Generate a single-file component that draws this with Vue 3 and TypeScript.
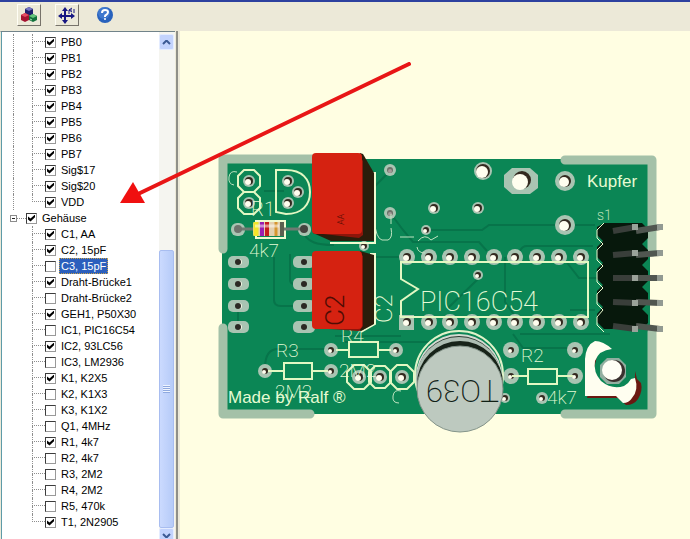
<script setup lang="ts">
import { reactive, ref } from 'vue'

interface TreeItem {
  label: string
  checked: boolean
}

interface Via {
  x: number
  y: number
  r: number
  hole: number
}

const item = (label: string, checked = true): TreeItem => ({ label, checked })

const signals = reactive<TreeItem[]>([
  item('PB0'),
  item('PB1'),
  item('PB2'),
  item('PB3'),
  item('PB4'),
  item('PB5'),
  item('PB6'),
  item('PB7'),
  item('Sig$17'),
  item('Sig$20'),
  item('VDD'),
])

const packages = reactive<TreeItem[]>([
  item('C1, AA'),
  item('C2, 15pF'),
  item('C3, 15pF', false),
  item('Draht-Brücke1'),
  item('Draht-Brücke2', false),
  item('GEH1, P50X30'),
  item('IC1, PIC16C54', false),
  item('IC2, 93LC56'),
  item('IC3, LM2936', false),
  item('K1, K2X5'),
  item('K2, K1X3', false),
  item('K3, K1X2', false),
  item('Q1, 4MHz', false),
  item('R1, 4k7'),
  item('R2, 4k7', false),
  item('R3, 2M2', false),
  item('R4, 2M2', false),
  item('R5, 470k', false),
  item('T1, 2N2905'),
])

const packagesChecked = ref(true)
const selected = ref('C3, 15pF')

const via = (x: number, y: number, r: number, hole: number): Via => ({ x, y, r, hole })

const icColumns = [407, 429, 450, 472, 494, 515, 537, 559, 581]
const socketRows = [262, 284, 306, 327]

const vias: Via[] = [
  via(483, 171, 9, 7),
  via(565, 181, 10, 6),
  via(565, 225, 10, 6),
  via(434, 208, 6, 4),
  via(478, 208, 6, 4),
  via(426, 230, 5, 3),
  via(478, 275, 5, 3),
  via(364, 246, 5, 3),
  via(249, 181, 6, 4),
  via(249, 203, 6, 4),
  via(288, 181, 6, 4),
  via(298, 192, 6, 4),
  via(288, 203, 6, 4),
  via(331, 350, 7, 3),
  via(396, 350, 7, 3),
  via(265, 371, 7, 3),
  via(331, 371, 7, 3),
  via(359, 377, 7, 4),
  via(380, 377, 7, 4),
  via(402, 377, 7, 4),
  via(511, 350, 8, 3),
  via(575, 350, 8, 3),
  via(511, 376, 8, 3),
  via(575, 376, 8, 3),
  via(505, 398, 5, 3),
  via(542, 398, 6, 3),
  ...icColumns.map((x) => via(x, 257, 8, 4)),
  ...icColumns.slice(1).map((x) => via(x, 322, 8, 4)),
]

const octagon = (cx: number, cy: number, r: number): string => {
  const k = Math.round(r * 0.45)
  return [
    [-k, -r], [k, -r], [r, -k], [r, k], [k, r], [-k, r], [-r, k], [-r, -k],
  ].map(([dx, dy]) => `${cx + dx},${cy + dy}`).join(' ')
}

const outlines = [
  octagon(249, 181, 11),
  octagon(249, 203, 11),
  octagon(359, 377, 12),
  octagon(380, 377, 11),
  octagon(402, 377, 12),
]

const pins = [
  { y: 230, tilt: 4 },
  { y: 254, tilt: 2 },
  { y: 277, tilt: 0 },
  { y: 301, tilt: -1 },
  { y: 325, tilt: -3 },
]
</script>

<template>
  <div class="app">
    <header class="toolbar">
      <button class="tool" type="button" aria-label="3D">
        <svg width="18" height="18" viewBox="0 0 18 18">
          <path d="M5 3 9 1l4 2v5l-4 2-4-2z" fill="#20206c" />
          <path d="m5 3 4-2 4 2-4 2z" fill="#7777c4" />
          <path d="m1 9 4-2 4 2v5l-4 2-4-2z" fill="#a51230" />
          <path d="m1 9 4-2 4 2-4 2z" fill="#e34c61" />
          <path d="m9 10 4-2 4 2v4l-4 2-4-2z" fill="#12713b" />
          <path d="m9 10 4-2 4 2-4 2z" fill="#64c47c" />
          <path d="M10 13l2 1" stroke="#a6e5b5" />
        </svg>
      </button>
      <button class="tool" type="button" aria-label="XY">
        <svg width="18" height="18" viewBox="0 0 18 18" fill="none" stroke="#171782">
          <path d="M7 3v13M2 10h13" stroke-width="2" />
          <path d="m4 5 3-4 3 4zM4 14l3 4 3-4zM4 7l-4 3 4 3zM13 7l4 3-4 3z" fill="#171782" stroke="none" />
          <path d="M11 8V4h3M16 3v4M14 2l-3 2 3 2" stroke-width="1" />
        </svg>
      </button>
      <button class="help" type="button" aria-label="?">
        <svg width="18" height="18" viewBox="0 0 18 18">
          <circle cx="9" cy="9" r="8" fill="#2862bd" />
          <circle cx="8" cy="7" r="6" fill="#4e87d8" opacity=".6" />
          <path d="M6 7q0-3 3-3t3 2q0 2-2 3-1 0-1 2" fill="none" stroke="#fff" stroke-width="2" />
          <circle cx="9" cy="13" r="1" fill="#fff" />
        </svg>
      </button>
    </header>

    <main class="workspace">
      <aside class="panel">
        <div class="tree">
          <ul class="branch open-above">
            <li v-for="s in signals" :key="s.label" class="row">
              <span class="trunk"></span>
              <span class="stem"></span>
              <label class="entry">
                <input v-model="s.checked" type="checkbox" />
                <span class="text">{{ s.label }}</span>
              </label>
            </li>
          </ul>
          <div class="row root">
            <button class="expander" type="button" aria-label="−"></button>
            <span class="dash"></span>
            <label class="entry">
              <input v-model="packagesChecked" type="checkbox" />
              <span class="text">Gehäuse</span>
            </label>
          </div>
          <ul class="branch">
            <li v-for="p in packages" :key="p.label" class="row">
              <span class="trunk"></span>
              <span class="stem"></span>
              <label class="entry" @click="selected = p.label">
                <input v-model="p.checked" type="checkbox" />
                <span class="text" :class="{ selected: selected === p.label }">{{ p.label }}</span>
              </label>
            </li>
          </ul>
        </div>
        <div class="scrollbar">
          <button class="scroll-button" type="button" aria-label="▲">
            <svg width="9" height="6" viewBox="0 0 9 6"><path d="M1 5l3-3h1l3 3" fill="none" stroke="#3c5a94" stroke-width="2" /></svg>
          </button>
          <div class="track"></div>
          <div class="thumb"><span class="grip"></span></div>
          <button class="scroll-button down" type="button" aria-label="▼">
            <svg width="9" height="6" viewBox="0 0 9 6"><path d="M1 1l3 3h1l3-3" fill="none" stroke="#3c5a94" stroke-width="2" /></svg>
          </button>
        </div>
      </aside>
      <div class="splitter"></div>
      <section class="canvas">
        <svg class="board" width="452" height="288" viewBox="214 150 452 288">
          <path d="M222 159H650V414H222Z" fill="#0b8655" />

          <g class="traces">
            <path d="M264 191h20M302 229c4 14 16 16 32 16M374 187l14-14M391 214l12 16 10 12h66l8 9M430 230h52l7-5h106M375 257h28" />
            <path d="M274 257v43q0 6 7 6h14M290 254v26q0 4 5 4M238 312v12M265 368q0-19 13-19h48M335 336h66M345 342h85" />
            <path d="M478 279l-30 29M505 257v45l14 20M520 251q2-5 7-5h66M565 260l14 18h18M520 334h90M513 334l10 14h52M570 310h25" />
          </g>

          <g class="copper">
            <path d="M223 249V159H320" />
            <path d="M223 328V414H310" />
            <path d="M565 160H652V252" />
            <path d="M652 332V414H565" />
          </g>

          <g v-for="y in socketRows" :key="y">
            <rect x="228" :y="y - 6" width="21" height="12" rx="5" class="pad" />
            <rect x="293" :y="y - 6" width="22" height="12" rx="5" class="pad" />
            <circle cx="239" :cy="y" r="3" fill="#f4f6e4" />
            <circle cx="238" :cy="y" r="3" fill="#2b2924" />
            <circle cx="304" :cy="y" r="3" fill="#2b2924" />
          </g>

          <path d="M512 168h18l8 7v13l-8 6h-18l-8-7v-12z" class="pad" />
          <circle cx="522" cy="180" r="9" fill="#33291f" />
          <circle cx="520" cy="182" r="8" fill="#fffeef" />
          <rect x="399" y="315" width="15" height="15" class="pad" />
          <circle cx="407" cy="322" r="4" fill="#33291f" />
          <circle cx="406" cy="323" r="3" fill="#fffeef" />

          <g v-for="(v, i) in vias" :key="i">
            <circle :cx="v.x" :cy="v.y" :r="v.r" class="pad" />
            <circle :cx="v.x" :cy="v.y" :r="v.hole" fill="#33291f" />
            <circle :cx="v.x - 1" :cy="v.y + 1" :r="v.hole - 1" fill="#fffeef" />
          </g>
          <g v-for="y in [170, 213]" :key="y">
            <circle cx="390" :cy="y" r="6" class="pad" />
            <circle cx="390" :cy="y" r="3" fill="#6b7168" />
            <circle cx="390" :cy="y + 1" r="2" fill="#a39b98" />
          </g>

          <g class="silk">
            <polygon v-for="o in outlines" :key="o" :points="o" />
            <path d="M276 170h10c16 0 24 9 24 22s-8 22-24 22l-10-2z" />
            <path d="M588 262H401v17l17 10-17 12v16h187z" />
            <path d="M336 350h13M378 350h13M349 342h29v15h-29zM268 371h16M312 371h16M284 363h28v16h-28z" />
            <path d="M512 376h16M557 376h16M528 369h29v15h-29z" />
          </g>
          <g class="silk-thin">
            <path d="M374 219q2 20 8 21h6q5-2 3-12M391 214v10M400 237h14M418 241q7-8 13-1l7-4M417 247q1 6 8 6" />
            <path d="M401 391q-7-2-8 5t6 7M237 172q-7-2-8 5t5 8" />
          </g>

          <g class="vector">
            <text x="251" y="216" font-size="20">R1</text>
            <text x="249" y="257" font-size="19">4k7</text>
            <text x="276" y="357" font-size="19">R3</text>
            <text x="275" y="398" font-size="19">2M2</text>
            <text x="341" y="342" font-size="19">R4</text>
            <text x="339" y="377" font-size="19">2M2</text>
            <text x="521" y="362" font-size="19">R2</text>
            <text x="547" y="404" font-size="19">4k7</text>
            <text x="420" y="311" font-size="27">PIC16C54</text>
            <text x="597" y="220" font-size="14">s1</text>
            <text transform="translate(392 323) rotate(-90)" font-size="24">C2</text>
          </g>
          <g class="lettering">
            <text x="228" y="403">Made by Ralf ®</text>
            <text x="587" y="187">Kupfer</text>
          </g>

          <!-- R1 -->
          <rect x="256" y="221" width="29" height="17" fill="#0b8655" stroke="#f0fbd0" stroke-width="2" />
          <rect x="231" y="223" width="14" height="13" rx="6" class="pad" />
          <rect x="298" y="223" width="13" height="13" rx="6" class="pad" />
          <path d="M237 229h16M283 229h20" stroke="#6f7a72" stroke-width="3" />
          <circle cx="238" cy="229" r="4" fill="#6d726c" />
          <circle cx="304" cy="229" r="4" fill="#45433f" />
          <rect x="253" y="222" width="31" height="14" rx="2" fill="#e3cfae" />
          <path d="M256 222v14" stroke="#f3e629" stroke-width="5" />
          <path d="M262 222v14" stroke="#9b1db0" stroke-width="4" />
          <path d="M267 222v14" stroke="#c51c1c" stroke-width="4" />
          <path d="M276 222v14" stroke="#d6962f" stroke-width="3" />
          <path d="M282 222v14" stroke="#5b604f" stroke-width="4" />
          <path d="M255 226h24" stroke="#fff" stroke-width="3" opacity=".5" />

          <!-- C1 -->
          <path d="M372 173h3v70h-45" class="edge" />
          <path d="M360 153l3 1 11 19v68h-43l-18-8z" fill="#2a1d0b" />
          <path d="M359 154l4 7v74l-4 3-45-5" fill="#8d160b" />
          <rect x="312" y="153" width="50" height="81" rx="4" fill="#d52211" />
          <text transform="translate(344 225) rotate(-90)" class="engraved" font-size="9">AA</text>

          <!-- C2 -->
          <path d="M370 254h5v70l-14 8" class="edge" />
          <path d="M360 251l14 4v69l-13 7-20-5z" fill="#2a1d0b" />
          <path d="M359 252l4 4v70l-4 5-45-3" fill="#8d160b" />
          <rect x="312" y="251" width="50" height="78" rx="4" fill="#d52211" />
          <text transform="translate(344 326) rotate(-90)" class="engraved" font-size="26">C2</text>

          <!-- K1 -->
          <path
            d="M604 223h38l6 6v9l-6 6 6 6v9l-6 6 6 6v10l-6 6 6 6v10l-6 6 6 6v8l-6 6h-38l-7-7v-8l6-7-6-6v-10l6-6-6-6v-10l6-6-6-6v-10l6-6-6-6v-8z"
            fill="#07180c"
          />
          <path
            d="M604 223l-7 7v8l6 6-6 6v10l6 6-6 6v10l6 6-6 6v10l6 6-6 7v8l7 7"
            fill="none" stroke="#eafbd0"
          />
          <g v-for="pin in pins" :key="pin.y">
            <path :d="`M613 ${pin.y + 1}L636 ${pin.y - pin.tilt + 1}`" stroke="#393e3a" stroke-width="6" />
            <path :d="`M636 ${pin.y + 1}L660 ${pin.y - pin.tilt + 1}`" stroke="#505650" stroke-width="6" />
            <rect x="632" :y="pin.y - pin.tilt - 2" width="6" height="6" fill="#9aa29a" />
            <rect x="657" :y="pin.y - pin.tilt - 2" width="6" height="6" fill="#929a92" />
          </g>

          <!-- T1 -->
          <circle cx="459" cy="375" r="44" fill="#0b8655" stroke="#dff3c9" stroke-width="2" />
          <circle cx="459" cy="377" r="43" fill="#d5dbd2" />
          <circle cx="459" cy="378" r="42" fill="#2c3a31" />
          <circle cx="459" cy="380" r="43" fill="#aebeb3" />
          <circle cx="460" cy="384" r="43" fill="#182319" />
          <circle cx="460" cy="389" r="43" fill="#bdc9bf" stroke="#84948a" />
          <text transform="translate(499 380) rotate(180)" class="can" font-size="31">TO39</text>

          <!-- mounting corner -->
          <path d="M587 398h31l8 7q8 0 12-6 5-8 3-16l-4-4-2-8v12l-10 8-25-4-8-20 6-15z" fill="#6b1912" />
          <path
            d="M585 396v-37q1-14 10-18 8 0 17 8-13 1-17 12-2 11 6 20 11 9 23 5 5-3 7-7l4-1q4 12-3 20-3 5-9 5l-7-7z"
            fill="#fffef0"
          />
          <polygon :points="octagon(613, 371, 13)" fill="#92aea0" />
          <circle cx="614" cy="371" r="11" fill="#3a302e" />
          <circle cx="612" cy="370" r="10" fill="#fffef5" />
        </svg>
      </section>
    </main>

    <svg class="pointer" width="292" height="142" viewBox="120 62 292 142">
      <path d="M409 64 138 194" stroke="#e81616" stroke-width="4" stroke-linecap="round" />
      <path d="m120 203 13-21 12 21z" fill="#f01010" />
    </svg>
  </div>
</template>

<style>
body {
  margin: 0;
  background: #fffee2;
}
</style>

<style scoped>
.app {
  position: relative;
  display: flex;
  flex-direction: column;
  height: 100vh;
  overflow: hidden;
  font-family: "Liberation Sans", Arial, sans-serif;
  font-size: 11px;
  color: #000;
}

button {
  padding: 0;
  border: 0;
  background: none;
}

.toolbar {
  display: flex;
  align-items: center;
  gap: 14px;
  box-sizing: border-box;
  height: 31px;
  flex: none;
  padding: 0 17px 4px;
  border-top: 2px solid #2d419f;
  background: #ece9d8;
}

.tool,
.help {
  display: grid;
  place-items: center;
  box-sizing: border-box;
  width: 24px;
  height: 22px;
}

.tool {
  border: 1px solid;
  border-color: #fffef5 #77736a #77736a #fffef5;
}

.workspace {
  display: flex;
  flex: 1;
  min-height: 0;
}

.panel {
  display: flex;
  flex: none;
  box-sizing: border-box;
  width: 175px;
  border-top: 1px solid #71838a;
  border-left: 1px solid #ece9d8;
  background: #fff;
  overflow: hidden;
}

.tree {
  flex: 1;
  box-sizing: border-box;
  padding-top: 2px;
  border-left: 1px solid #5e9ba8;
}

.branch {
  margin: 0;
  padding: 0;
  list-style: none;
}

.row {
  display: flex;
  align-items: center;
  height: 16px;
  padding-left: 11px;
}

.trunk {
  width: 18px;
  height: 16px;
  border-left: 1px solid transparent;
}

.open-above .trunk {
  border-left: 1px dotted #8e8e8e;
}

.stem {
  width: 13px;
  height: 16px;
}

.stem::before,
.stem::after {
  content: "";
  display: block;
  box-sizing: border-box;
  height: 8px;
  border-left: 1px dotted #8e8e8e;
}

.stem::before {
  border-bottom: 1px dotted #8e8e8e;
}

.row:last-child .stem::after {
  border-left: 0;
}

.root {
  padding-left: 8px;
}

.expander {
  display: grid;
  place-items: center;
  box-sizing: border-box;
  width: 7px;
  height: 7px;
  border: 1px solid #8c8c8c;
}

.expander::before {
  content: "";
  width: 3px;
  height: 1px;
  background: #222;
}

.dash {
  width: 9px;
  border-top: 1px dotted #8e8e8e;
}

.entry {
  display: flex;
  align-items: center;
  gap: 3px;
  white-space: nowrap;
}

.entry input {
  appearance: none;
  display: grid;
  place-items: center;
  box-sizing: border-box;
  width: 11px;
  height: 11px;
  margin: 0;
  border: 1px solid;
  border-color: #3c3c3c #999 #999 #3c3c3c;
  background: #fff;
}

.entry input:checked::before {
  content: "";
  width: 7px;
  height: 7px;
  background: #000;
  clip-path: polygon(0 30%, 36% 58%, 100% 0, 100% 40%, 36% 100%, 0 70%);
}

.text {
  padding: 0 2px;
  line-height: 16px;
}

.text.selected {
  background: #2b5fbd;
  color: #fff;
  outline: 1px dotted #c9a24a;
  outline-offset: -1px;
}

.scrollbar {
  display: flex;
  flex-direction: column;
  flex: none;
  width: 16px;
  padding-top: 2px;
  background: #f5f5f0;
}

.scroll-button {
  display: grid;
  place-items: center;
  flex: none;
  box-sizing: border-box;
  width: 15px;
  height: 16px;
  border: 1px solid #e4ecff;
  border-radius: 2px;
  background: #c3d3fd;
}

.down {
  margin-bottom: -5px;
}

.track {
  flex: 200;
}

.thumb {
  display: grid;
  place-items: center;
  flex: 277;
  box-sizing: border-box;
  width: 15px;
  border: 1px solid #a8bdf0;
  border-radius: 2px;
  background: linear-gradient(90deg, #cbdafe, #b6cbf8);
}

.grip {
  width: 7px;
  height: 8px;
  background: repeating-linear-gradient(#eef4ff 0 1px, #8fa9df 1px 2px);
}

.splitter {
  flex: none;
  box-sizing: border-box;
  width: 5px;
  border-left: 1px solid #ece9d8;
  border-right: 2px solid #ece9d8;
  background: #8f8f88;
}

.canvas {
  flex: 1;
  min-width: 0;
  padding: 119px 0 0 34px;
  background: #fffee2;
}

.board {
  display: block;
}

.pad {
  fill: #a9c4b2;
}

.traces {
  fill: none;
  stroke: #07744a;
  stroke-width: 2;
}

.copper {
  fill: none;
  stroke: #a4c1a8;
  stroke-width: 9;
  stroke-linecap: round;
  stroke-linejoin: round;
}

.silk {
  fill: none;
  stroke: #e3f8c3;
  stroke-width: 2;
}

.silk-thin {
  fill: none;
  stroke: #bfe3c0;
  stroke-width: 1;
}

.vector {
  font-family: Roboto, "Open Sans", sans-serif;
  font-weight: 200;
  fill: #e6fbd6;
}

.lettering {
  font-size: 17px;
  fill: #e6fbd2;
}

.edge {
  fill: none;
  stroke: #f0fbd0;
  stroke-width: 2;
}

.engraved {
  font-family: Roboto, sans-serif;
  font-weight: 300;
  fill: #4f0c04;
}

.can {
  font-family: Roboto, sans-serif;
  font-weight: 200;
  fill: #102015;
}

.pointer {
  position: absolute;
  left: 120px;
  top: 62px;
  pointer-events: none;
}
</style>
